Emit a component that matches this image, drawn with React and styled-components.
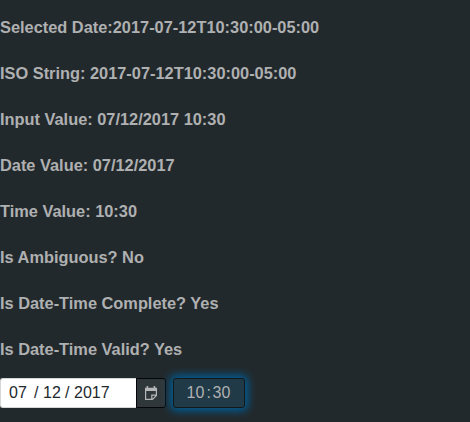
import React from 'react';
import styled, { createGlobalStyle } from 'styled-components';

const GlobalStyle = createGlobalStyle`
  body {
    margin: 0;
    background: #22292c;
  }
`;

const Page = styled.main`
  box-sizing: border-box;
  min-height: 100vh;
  padding-top: 18px;
  color: #afb0b1;
  font: 16px/18px "Liberation Sans", Arial, sans-serif;
`;

const Heading = styled.h3`
  margin: 0 0 28px;
  font-size: 16.38px;
  font-weight: 700;
  line-height: 18px;
`;

const Inputs = styled.div`
  display: flex;
  gap: 7px;
  margin-top: -8px;
`;

const DateInput = styled.div`
  display: flex;
  height: 30px;
`;

const DateSegments = styled.div`
  box-sizing: border-box;
  display: flex;
  align-items: center;
  width: 136px;
  padding-left: 8px;
  border: solid #d4d6d7;
  border-width: 1px 0 1px 1px;
  border-radius: 3px 0 0 3px;
  background: #fff;
  color: #22292c;
`;

const Segment = styled.span`
  width: ${({ $width }) => $width}px;
`;

const CalendarButton = styled.button`
  box-sizing: border-box;
  display: flex;
  align-items: center;
  justify-content: center;
  width: 30px;
  height: 30px;
  padding: 0;
  border: 1px solid #050607;
  border-radius: 0 3px 3px 0;
  background: #30373a;
  color: #b4b6b7;
`;

const TimeInput = styled.div`
  box-sizing: border-box;
  display: flex;
  align-items: center;
  width: 72px;
  height: 30px;
  padding-left: 12.5px;
  border: 1px solid #11191d;
  border-radius: 3px;
  background: #213a48;
  box-shadow: 0 0 8px 3px #005e96;
`;

const details = [
  'Selected Date:2017-07-12T10:30:00-05:00',
  'ISO String: 2017-07-12T10:30:00-05:00',
  'Input Value: 07/12/2017 10:30',
  'Date Value: 07/12/2017',
  'Time Value: 10:30',
  'Is Ambiguous? No',
  'Is Date-Time Complete? Yes',
  'Is Date-Time Valid? Yes',
];

function CalendarIcon() {
  return (
    <svg width="14" height="14" viewBox="0 0 14 14" aria-hidden="true">
      <path fill="currentColor" d="M2.6 0h1.6v1.8h5.4V0h1.6v1.8H13V5H1V1.8h1.6Z" />
      <path fill="none" stroke="currentColor" strokeWidth="1.2" d="M1.6 4.8v8.6h6.9l3.9-3.9V4.8M7.8 13.4V9.2h4.6" />
    </svg>
  );
}

export default function App() {
  return (
    <Page>
      <GlobalStyle />
      {details.map((text) => <Heading key={text}>{text}</Heading>)}
      <Inputs>
        <DateInput>
          <DateSegments>
            <Segment $width={25}>07</Segment>
            <Segment $width={9}>/</Segment>
            <Segment $width={22}>12</Segment>
            <Segment $width={9}>/</Segment>
            <Segment>2017</Segment>
          </DateSegments>
          <CalendarButton aria-label="Choose date"><CalendarIcon /></CalendarButton>
        </DateInput>
        <TimeInput>
          <Segment $width={20}>10</Segment>
          <Segment $width={6}>:</Segment>
          <Segment>30</Segment>
        </TimeInput>
      </Inputs>
    </Page>
  );
}
